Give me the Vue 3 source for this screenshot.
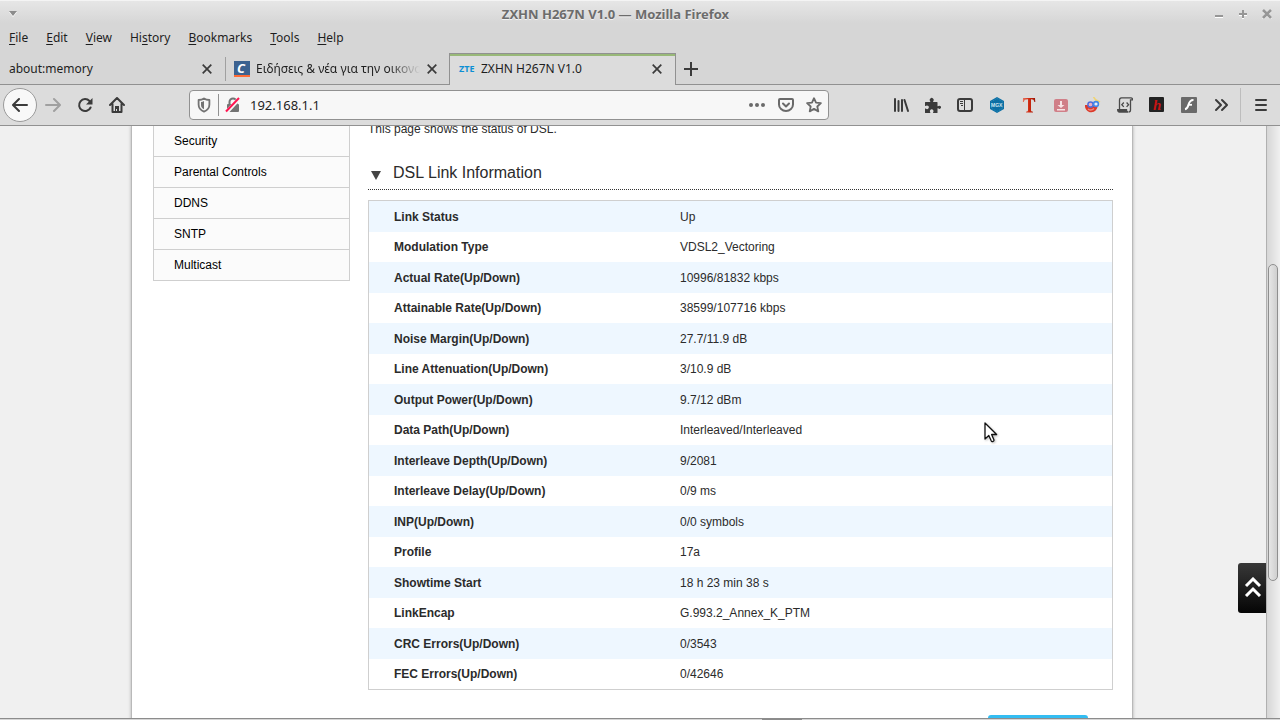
<script setup>
import { ref } from 'vue'

const address = ref('192.168.1.1')

const menus = [
  { before: '', key: 'F', after: 'ile' },
  { before: '', key: 'E', after: 'dit' },
  { before: '', key: 'V', after: 'iew' },
  { before: 'Hi', key: 's', after: 'tory' },
  { before: '', key: 'B', after: 'ookmarks' },
  { before: '', key: 'T', after: 'ools' },
  { before: '', key: 'H', after: 'elp' },
]

const sideLinks = ['Security', 'Parental Controls', 'DDNS', 'SNTP', 'Multicast']

const rows = [
  ['Link Status', 'Up'],
  ['Modulation Type', 'VDSL2_Vectoring'],
  ['Actual Rate(Up/Down)', '10996/81832 kbps'],
  ['Attainable Rate(Up/Down)', '38599/107716 kbps'],
  ['Noise Margin(Up/Down)', '27.7/11.9 dB'],
  ['Line Attenuation(Up/Down)', '3/10.9 dB'],
  ['Output Power(Up/Down)', '9.7/12 dBm'],
  ['Data Path(Up/Down)', 'Interleaved/Interleaved'],
  ['Interleave Depth(Up/Down)', '9/2081'],
  ['Interleave Delay(Up/Down)', '0/9 ms'],
  ['INP(Up/Down)', '0/0 symbols'],
  ['Profile', '17a'],
  ['Showtime Start', '18 h 23 min 38 s'],
  ['LinkEncap', 'G.993.2_Annex_K_PTM'],
  ['CRC Errors(Up/Down)', '0/3543'],
  ['FEC Errors(Up/Down)', '0/42646'],
]
</script>

<template>
  <div class="window">
    <header class="titlebar">
      <button class="win-menu" aria-label="Window menu">
        <svg width="10" height="8" viewBox="0 0 10 8"><path d="M1 2h8L5 7z" fill="#fff" /><path d="M1 1h8L5 6z" fill="#8c8c8c" /></svg>
      </button>
      <div class="title">ZXHN H267N V1.0 — Mozilla Firefox</div>
      <div class="win-controls">
        <button aria-label="Minimize">
          <svg width="10" height="10" viewBox="0 0 10 10"><path d="M1 7h8v2H1z" fill="#fff" /><path d="M1 6h8v2H1z" fill="#969696" /></svg>
        </button>
        <button aria-label="Maximize">
          <svg width="10" height="10" viewBox="0 0 10 10"><path d="M1 6h8M5 2v8" stroke="#fff" stroke-width="2" /><path d="M1 5h8M5 1v8" stroke="#969696" stroke-width="2" /></svg>
        </button>
        <button aria-label="Close window">
          <svg width="10" height="10" viewBox="0 0 10 10"><path d="M1 2l8 8M9 2l-8 8" stroke="#fff" stroke-width="2" /><path d="M1 1l8 8M9 1l-8 8" stroke="#969696" stroke-width="2.6" /></svg>
        </button>
      </div>
    </header>

    <nav class="menubar">
      <button v-for="m in menus" :key="m.key + m.after">{{ m.before }}<u>{{ m.key }}</u>{{ m.after }}</button>
    </nav>

    <div class="tabs">
      <div class="tab">
        <button class="tab-name">about:memory</button>
        <button class="tab-close" aria-label="Close tab">
          <svg width="10" height="10" viewBox="0 0 10 10"><path d="M.7.7l8.6 8.6M9.3.7L.7 9.3" stroke="#3b3b3b" stroke-width="1.7" /></svg>
        </button>
      </div>
      <div class="tab split">
        <svg class="fav" width="16" height="16" viewBox="0 0 16 16">
          <rect width="16" height="14" fill="#3c6290" /><rect y="14" width="16" height="2" fill="#ff6b35" />
          <text x="3" y="12" class="fav-c">C</text>
        </svg>
        <button class="tab-name fade">Ειδήσεις &amp; νέα για την οικονομία</button>
        <button class="tab-close" aria-label="Close tab">
          <svg width="10" height="10" viewBox="0 0 10 10"><path d="M.7.7l8.6 8.6M9.3.7L.7 9.3" stroke="#3b3b3b" stroke-width="1.7" /></svg>
        </button>
      </div>
      <div class="tab active">
        <span class="zte">ZTE</span>
        <button class="tab-name">ZXHN H267N V1.0</button>
        <button class="tab-close" aria-label="Close tab">
          <svg width="10" height="10" viewBox="0 0 10 10"><path d="M.7.7l8.6 8.6M9.3.7L.7 9.3" stroke="#3b3b3b" stroke-width="1.7" /></svg>
        </button>
      </div>
      <button class="new-tab" aria-label="New tab">
        <svg width="14" height="14" viewBox="0 0 14 14"><path d="M0 7h14M7 0v14" stroke="#3b3b3b" stroke-width="2" /></svg>
      </button>
    </div>

    <div class="toolbar">
      <button class="back" aria-label="Back">
        <svg width="16" height="16" viewBox="0 0 16 16" fill="none" stroke="#3b3b3b" stroke-width="2" stroke-linecap="round" stroke-linejoin="round"><path d="M15 8H1.5M7 2L1 8l6 6" /></svg>
      </button>
      <button class="tool" aria-label="Forward">
        <svg width="16" height="16" viewBox="0 0 16 16" fill="none" stroke="#a0a0a0" stroke-width="2" stroke-linecap="round" stroke-linejoin="round"><path d="M1 8h13.500M9 2l6 6-6 6" /></svg>
      </button>
      <button class="tool" aria-label="Reload">
        <svg width="16" height="16" viewBox="0 0 16 16"><path d="M13.600 10.500A6 6 0 1 1 12.500 4" fill="none" stroke="#3b3b3b" stroke-width="2" stroke-linecap="round" /><path d="M15.500 1v6.500H9z" fill="#3b3b3b" /></svg>
      </button>
      <button class="tool" aria-label="Home">
        <svg width="16" height="16" viewBox="0 0 16 16"><path d="M1 8l7-7 7 7M3.500 7v8h9V7" fill="none" stroke="#3b3b3b" stroke-width="2" stroke-linecap="round" stroke-linejoin="round" /><path d="M6 9h4v6H8v-3H7v3H6z" fill="#3b3b3b" /></svg>
      </button>

      <div class="urlbar">
        <svg width="14" height="16" viewBox="0 0 14 16"><path d="M7 1.500C5.500 2.600 3.500 3 1.600 3v4.500C1.600 11 4 13.500 7 14.600c3-1.100 5.400-3.600 5.400-7.100V3C10.500 3 8.500 2.600 7 1.500z" fill="none" stroke="#737373" stroke-width="1.800" stroke-linejoin="round" /><path d="M7 4C6 4.600 5 4.900 4 5v3c0 2 1.200 3.500 3 4.300z" fill="#737373" /></svg>
        <i class="rule"></i>
        <svg width="16" height="16" viewBox="0 0 16 16"><path d="M4.500 7.500V5a3.500 3.500 0 0 1 7 0v2.500" fill="none" stroke="#737373" stroke-width="2" /><rect x="2" y="7" width="12" height="8" rx="1" fill="#737373" /><path d="M1.500 15.300L14.300 1.500" stroke="#f7f7f7" stroke-width="4" /><path d="M1 14.500L14 1" stroke="#ff1450" stroke-width="2" /></svg>
        <input v-model="address" type="text" aria-label="Address" />
        <svg width="18" height="16" viewBox="0 0 18 16" fill="#6a6a6a"><circle cx="3" cy="8" r="2" /><circle cx="9" cy="8" r="2" /><circle cx="15" cy="8" r="2" /></svg>
        <svg width="16" height="16" viewBox="0 0 16 16" fill="none" stroke="#6a6a6a" stroke-width="2" stroke-linecap="round" stroke-linejoin="round"><path d="M2 2h12a1 1 0 0 1 1 1v4.500a7 6.500 0 0 1-14 0V3a1 1 0 0 1 1-1zM5 6.500l3 3 3-3" /></svg>
        <svg width="16" height="16" viewBox="0 0 16 16" fill="none" stroke="#6a6a6a" stroke-width="1.800" stroke-linejoin="round"><path d="M8 1.200l2 4.500 4.900.5-3.600 3.300 1 4.900L8 11.900l-4.300 2.500 1-4.900L1.100 6.200 6 5.700z" /></svg>
      </div>

      <button class="tool" aria-label="Library">
        <svg width="16" height="16" viewBox="0 0 16 16" stroke="#3b3b3b" stroke-linecap="round"><path d="M2 2v12M5.500 4v10M9 3v11M11.500 3L15 14" stroke-width="2" /></svg>
      </button>
      <button class="tool" aria-label="Extensions">
        <svg width="16" height="16" viewBox="0 0 16 16" fill="#3b3b3b"><path d="M0 5.500Q0 5 .5 5H5c.5 0 .3-.6 0-1a2 2 0 1 1 3.400 0c-.3.400-.5 1 0 1H12q.5 0 .5.500V9c0 .4.600.3 1 0a1.600 1.600 0 1 1 0 2.600c-.4-.3-1-.4-1 0v3.900q0 .5-.5.500H8.300c-.5 0-.3-.7 0-1.100a1.800 1.800 0 1 0-3.200 0c.3.400.5 1.100 0 1.100H.5Q0 16 0 15.500v-3.700c0-.5.600-.3 1 0a1.800 1.800 0 1 0 0-3c-.4.300-1 .5-1 0z" /></svg>
      </button>
      <button class="tool" aria-label="Sidebars">
        <svg width="16" height="16" viewBox="0 0 16 16" fill="none" stroke="#3b3b3b"><rect x="1" y="2" width="14" height="12" rx="2" stroke-width="2" /><path d="M7.500 2v12" stroke-width="1" /><path d="M3 4.500h3M3 6.500h3M4 8.500h2" stroke-width="1" /></svg>
      </button>
      <button class="tool" aria-label="MGX">
        <svg width="16" height="16" viewBox="0 0 16 16"><path d="M8 0l7 4v8l-7 4-7-4V4z" fill="#0b6fa4" /><path d="M8 1.500l5.500 3.200v6.600L8 14.500l-5.500-3.200V4.700z" fill="none" stroke="#2c89b8" stroke-dasharray="1 1" /><text x="2" y="10" class="mgx">MGX</text></svg>
      </button>
      <button class="tool" aria-label="Text extension">
        <svg width="16" height="16" viewBox="0 0 16 16"><defs><linearGradient id="red"><stop offset="0" stop-color="#e87560" /><stop offset=".5" stop-color="#cf2a10" /><stop offset="1" stop-color="#9c1505" /></linearGradient></defs><path d="M2 1h12l.3 4h-.9C13 3 12.300 2.300 10 2.300V13c0 1.300.5 1.600 2 1.800v.7H5v-.7c1.500-.2 2-.5 2-1.800V2.300C4 2.300 3.200 3 2.800 5h-.9z" fill="url(#red)" /></svg>
      </button>
      <button class="tool" aria-label="Download">
        <svg width="16" height="16" viewBox="0 0 16 16"><rect x="1" y="2" width="14" height="13" rx="2" fill="#d07f88" /><path d="M7 4h2v4h2.500L8 11 4.500 8H7zM4 12h8v1.500H4z" fill="#f7e3e5" /></svg>
      </button>
      <button class="tool" aria-label="Video helper">
        <svg width="16" height="16" viewBox="0 0 16 16" fill="none"><path d="M8.500 0l3 4M11 3l4 2" stroke="#f0d470" stroke-width="1.500" /><path d="M0 8C-.5 12 3 15.800 6.500 15.300 10 15 12 12.500 12.500 10L7 8z" fill="#dc3a2a" /><path d="M3 12c2 1.500 4 1.500 6-.5" stroke="#ef8b80" stroke-width="1.500" /><circle cx="5.500" cy="7.500" r="2.600" fill="#e7b0c4" stroke="#506edc" stroke-width="1.500" /><circle cx="11" cy="7" r="2.400" fill="#e6ebf8" stroke="#4288e6" stroke-width="1.600" /></svg>
      </button>
      <button class="tool" aria-label="User scripts">
        <svg width="16" height="16" viewBox="0 0 16 16" fill="none" stroke="#4a4a4a" stroke-width="1.300"><path d="M2.500 12V3a2.200 2.200 0 0 1 2-2.200H14a1.700 1.700 0 0 1 1.500 2H13.500V13a2 2 0 0 1-2 2" /><path d="M11 15H2.500A2 2 0 0 1 .7 12.700h8.800C9.500 14 10 15 11 15z" fill="#4a4a4a" /><path d="M6.800 5.500l-2 2.200 2 2.200M9.600 5.500l2 2.200-2 2.200" /></svg>
      </button>
      <button class="tool" aria-label="h extension">
        <svg width="16" height="16" viewBox="0 0 16 16"><rect width="15" height="15" rx="1" fill="#222" /><text x="4" y="13" class="h-icon">h</text></svg>
      </button>
      <button class="tool" aria-label="Flash">
        <svg width="16" height="16" viewBox="0 0 16 16"><rect width="16" height="16" rx="1" fill="#6a6a6a" /><path d="M12.500 3C8.500 2.800 8 6 7.200 8.600 6.600 11 5.800 12 4 12.300" fill="none" stroke="#fff" stroke-width="2" /><path d="M7 7.800h4" stroke="#fff" stroke-width="1.800" /></svg>
      </button>
      <button class="tool" aria-label="More tools">
        <svg width="16" height="16" viewBox="0 0 16 16" fill="none" stroke="#3b3b3b" stroke-width="2" stroke-linecap="round" stroke-linejoin="round"><path d="M3 3l5 5-5 5M9 3l5 5-5 5" /></svg>
      </button>
      <i class="divider"></i>
      <button class="tool" aria-label="Open menu">
        <svg width="16" height="16" viewBox="0 0 16 16" stroke="#3b3b3b" stroke-width="2" stroke-linecap="round"><path d="M3 3h10M3 8h10M3 13h10" /></svg>
      </button>
    </div>

    <div class="body">
      <div class="viewport">
        <div class="page">
          <nav class="side">
            <a v-for="s in sideLinks" :key="s" href="#">{{ s }}</a>
          </nav>
          <main class="main">
            <p>This page shows the status of DSL.</p>
            <h1>
              <svg width="10" height="10" viewBox="0 0 10 10"><path d="M0 0h10L5 9z" fill="#444" /></svg>
              DSL Link Information
            </h1>
            <table>
              <tbody>
                <tr v-for="r in rows" :key="r[0]">
                  <th scope="row">{{ r[0] }}</th>
                  <td>{{ r[1] }}</td>
                </tr>
              </tbody>
            </table>
            <button class="refresh" aria-label="Refresh"></button>
          </main>
        </div>
        <button class="to-top" aria-label="Back to top">
          <svg width="18" height="20" viewBox="0 0 18 20" fill="none" stroke="#fff" stroke-width="3"><path d="M2 9l7-7 7 7M2 19l7-7 7 7" /></svg>
        </button>
      </div>
      <div class="scroll"><div class="thumb"></div></div>
    </div>
    <div class="foot"><div class="foot-mark"></div></div>

    <svg class="pointer" width="14" height="22" viewBox="0 0 14 22"><path d="M1 1v16l3.800-3.500L7.300 19c.6 1.200 3.200.2 2.600-1.200L7.600 12.500h5z" fill="#fff" stroke="#111" stroke-width="1.300" stroke-linejoin="round" /></svg>
  </div>
</template>

<style>
html, body { height: 100%; overflow: hidden; }
body { margin: 0; }
</style>

<style scoped>
* { box-sizing: border-box; }
button {
  border: 0; padding: 0; margin: 0; background: none; color: inherit;
  font: inherit;
}
svg { display: block; flex: none; }
.window {
  position: relative;
  display: flex; flex-direction: column;
  height: 100vh;
  background: #d6d6d6;
  color: #1e1e1e;
  font: 12px/18px "Noto Sans", sans-serif;
}
.titlebar {
  display: flex; align-items: center;
  height: 26px;
  border-top: 1px solid #f4f4f4;
  background: linear-gradient(#e6e6e6, #d6d6d6 22px);
}
.win-menu { width: 20px; padding-left: 8px; }
.title {
  flex: 1; text-align: center;
  font-size: 13px; font-weight: 700; color: #6c6c6c; text-shadow: 0 1px 0 #f2f2f2;
}
.win-controls { display: flex; gap: 14px; width: 69px; padding-left: 3px; }
.menubar {
  display: flex; align-items: center; gap: 18px;
  height: 27px; padding: 0 0 4px 9px;
}
.menubar u { text-underline-offset: 2px; }
.tabs {
  display: flex;
  height: 32px;
  box-shadow: inset 0 -1px #919191;
}
.tab {
  position: relative;
  display: flex; align-items: center;
  flex: 0 1 225px; min-width: 0;
  padding: 0 12px 0 9px;
}
.tab.split::before {
  content: ""; position: absolute; left: 0; top: 4px; bottom: 4px;
  width: 1px; background: #a0a0a0;
}
.tab.active {
  flex-basis: 227px;
  margin-left: -1px;
  padding-bottom: 1px;
  border: 1px solid #919191; border-bottom: 0;
  background: #dcdcdc;
  box-shadow: inset 0 2px #98b878;
}
.tab-name {
  flex: 1; min-width: 0;
  overflow: hidden; white-space: nowrap; text-align: left;
}
.fade { mask-image: linear-gradient(to left, transparent, #000 32px); }
.tab-close { margin-left: 6px; padding: 0 1px; }
.fav { margin-right: 6px; }
.fav-c { font: italic 700 13px "Noto Sans", sans-serif; fill: #fff; }
.zte { width: 22px; font-size: 9px; font-weight: 700; color: #0b8fd4; }
.new-tab { width: 30px; display: grid; place-items: center; }
.toolbar {
  display: flex; align-items: center;
  height: 41px; padding: 0 3px 0 3px;
  border-bottom: 1px solid #919191;
  background: #dcdcdc;
}
.back {
  width: 34px; height: 34px; border-radius: 50%;
  border: 1px solid #9a9a9a; background: #f8f8f8;
  display: grid; place-items: center;
}
.tool { width: 32px; height: 32px; display: grid; place-items: center; flex: none; }
.urlbar {
  display: flex; align-items: center; gap: 12px;
  flex: 1; min-width: 0; height: 30px;
  margin: 0 56px;
  padding: 0 6px 0 7px;
  border: 1px solid #919191; border-radius: 4px;
  background: #f7f7f7;
}
.urlbar .rule { width: 1px; height: 22px; margin: 0 -6px 0 -5px; background: #919191; }
.urlbar input {
  flex: 1; min-width: 0; padding: 0; margin-left: -3px;
  border: 0; outline: 0; background: none;
  color: #1e1e1e; font: inherit; font-size: 13px;
}
.divider { width: 1px; height: 34px; margin: 0 4px 0 3px; background: #bdbdbd; }
.mgx { font: 700 5px "Liberation Sans", sans-serif; fill: #cde5f1; }
.h-icon { font: italic 700 15px "Liberation Serif", serif; fill: #c81414; }
.body { display: flex; flex: 1; min-height: 0; }
.viewport {
  position: relative; flex: 1; min-width: 0;
  overflow: hidden;
  padding-right: 2px;
  background: #f0f0f0;
  font: 12px/16px "Liberation Sans", Arial, sans-serif;
}
.page {
  display: flex; align-items: flex-start; gap: 18px;
  max-width: 1002px; min-height: 100%;
  margin: 0 auto; padding: 0 19px 0 21px;
  border: solid #b9b9b9; border-width: 0 1px;
  background: #fff;
  box-shadow: 0 0 3px #aaa;
}
.side {
  display: flex; flex-direction: column; flex: none;
  width: 197px;
  border: solid #cfcfcf; border-width: 0 1px;
  background: #fbfbfb;
}
.side a {
  height: 31px; padding-left: 20px;
  border-bottom: 1px solid #cfcfcf;
  line-height: 30px; color: #000; text-decoration: none;
}
.main { flex: 1; min-width: 0; color: #2b2b2b; }
p { margin: -5px 0 0; }
h1 {
  display: flex; align-items: center; gap: 12px;
  margin: 0 0 10px; padding: 26px 0 6px 3px;
  border-bottom: 1px dotted #333;
  font-size: 16px; line-height: 20px; font-weight: 400;
}
h1 svg { margin-top: 5px; }
table {
  width: 100%;
  border: 1px solid #cfcfcf;
  border-spacing: 0;
}
tr { height: 30px; }
tr:nth-child(odd) { height: 31px; background: #eef7ff; }
th, td { padding: 0; text-align: left; }
th { width: 311px; padding-left: 25px; }
.refresh {
  display: block; width: 100px; height: 30px;
  margin: 25px 25px 0 auto;
  border-radius: 3px; background: #33bdf2;
}
.to-top {
  position: absolute; right: 0; bottom: 105px;
  width: 28px; height: 50px;
  display: grid; place-items: center;
  padding: 0 0 2px 2px;
  border-radius: 3px 0 0 3px;
  background: linear-gradient(#383838, #050505);
}
.scroll {
  width: 14px; padding-top: 138px;
  border-left: 1px solid #b0b0b0;
  background: linear-gradient(to right, #d6d6d6, #f0f0f0);
}
.thumb {
  width: 10px; height: 317px; margin-left: 1px;
  border: 1px solid #8f8f8f; border-radius: 5px;
  background: linear-gradient(to right, #e6e6e6, #cfcfcf);
}
.foot { height: 2px; padding-left: 762px; border-top: 1px solid #8c8c8c; }
.foot-mark { width: 40px; height: 1px; background: #8c8c8c; }
.pointer { position: absolute; left: 984px; top: 422px; filter: drop-shadow(1px 1px 1px #0004); }
</style>
